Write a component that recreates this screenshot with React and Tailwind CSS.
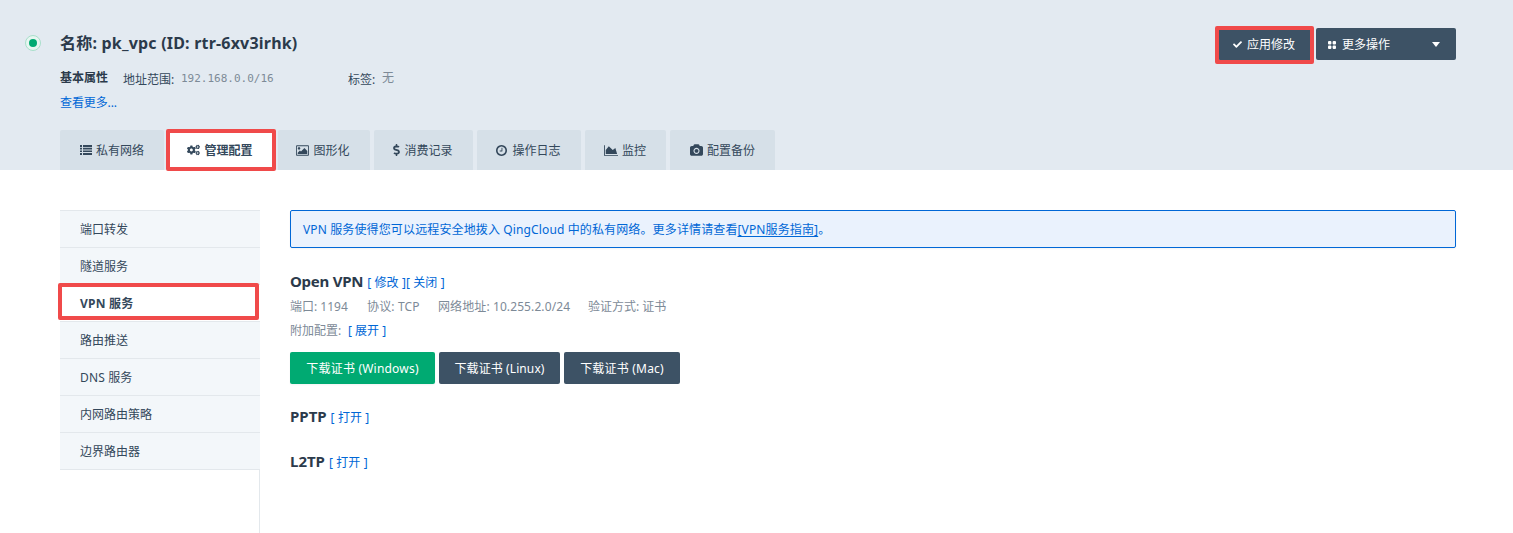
import React from "react";
import { FaCheck, FaCogs, FaDollarSign } from "react-icons/fa";

const glyph = (viewBox, d) =>
  function Glyph({ className }) {
    return (
      <svg viewBox={viewBox} className={className} fill="currentColor">
        <path d={d} />
      </svg>
    );
  };

const ListIcon = glyph(
  "0 0 12 10",
  "M0 0h2v2H0zM3 0h9v2H3zM0 2.8h2v1.7H0zM3 2.8h9v1.7H3zM0 5.4h2v1.7H0zM3 5.4h9v1.7H3zM0 8h2v2H0zM3 8h9v2H3z"
);

const PictureIcon = glyph(
  "-64 128 1920 1536",
  "M576 576q0 80-56 136t-136 56-136-56-56-136 56-136 136-56 136 56 56 136zm1024 384v448h-1408v-192l320-320 160 160 512-512zm96-704h-1600q-13 0-22.5 9.5t-9.5 22.5v1216q0 13 9.5 22.5t22.5 9.5h1600q13 0 22.5-9.5t9.5-22.5v-1216q0-13-9.5-22.5t-22.5-9.5zm160 32v1216q0 66-47 113t-113 47h-1600q-66 0-113-47t-47-113v-1216q0-66 47-113t113-47h1600q66 0 113 47t47 113z"
);

const ClockIcon = glyph(
  "128 128 1536 1536",
  "M1024 544v448q0 14-9 23t-23 9h-320q-14 0-23-9t-9-23v-64q0-14 9-23t23-9h224v-352q0-14 9-23t23-9h64q14 0 23 9t9 23zm416 352q0-148-73-273t-198-198-273-73-273 73-198 198-73 273 73 273 198 198 273 73 273-73 198-198 73-273zm224 0q0 209-103 385.5t-279.5 279.5-385.5 103-385.5-103-279.5-279.5-103-385.5 103-385.5 279.5-279.5 385.5-103 385.5 103 279.5 279.5 103 385.5z"
);

const AreaIcon = glyph(
  "0 128 2048 1536",
  "M2048 1536v128h-2048v-1536h128v1408h1920zm-384-1024l256 896h-1664v-576l448-576 576 576z"
);

const CameraIcon = glyph(
  "0 192 1920 1664",
  "M960 864q119 0 203.5 84.5t84.5 203.5-84.5 203.5-203.5 84.5-203.5-84.5-84.5-203.5 84.5-203.5 203.5-84.5zm704-416q106 0 181 75t75 181v896q0 106-75 181t-181 75h-1408q-106 0-181-75t-75-181v-896q0-106 75-181t181-75h224l51-136q19-49 69.5-84.5t103.5-35.5h512q53 0 103.5 35.5t69.5 84.5l51 136h224zm-704 1152q185 0 316.5-131.5t131.5-316.5-131.5-316.5-316.5-131.5-316.5 131.5-131.5 316.5 131.5 316.5 316.5 131.5z"
);

const GridIcon = ({ className }) => (
  <svg viewBox="0 0 8 8" className={className} fill="currentColor">
    <rect x="0" y="0" width="3.4" height="3.4" rx="1" />
    <rect x="4.6" y="0" width="3.4" height="3.4" rx="1" />
    <rect x="0" y="4.6" width="3.4" height="3.4" rx="1" />
    <rect x="4.6" y="4.6" width="3.4" height="3.4" rx="1" />
  </svg>
);

const tabs = [
  { label: "私有网络", Icon: ListIcon, icon: "w-3 h-2.5 mr-1", box: "w-[104px]" },
  { label: "管理配置", Icon: FaCogs, icon: "w-[13px] h-3 mr-1", box: "w-[106px] pr-[2px]", active: true },
  { label: "图形化", Icon: PictureIcon, icon: "w-[13px] h-[11px] mr-1", box: "w-[92px] pr-[2px]" },
  { label: "消费记录", Icon: FaDollarSign, icon: "w-[7px] h-3 mr-1", box: "w-[99px] pr-px" },
  { label: "操作日志", Icon: ClockIcon, icon: "w-[11px] h-[11px] mr-[5px]", box: "w-[104px] pr-px" },
  { label: "监控", Icon: AreaIcon, icon: "w-[14px] h-[11px] mr-1", box: "w-[81px] pr-px" },
  { label: "配置备份", Icon: CameraIcon, icon: "w-[13px] h-3 mr-1", box: "w-[105px]" },
];

const sections = ["端口转发", "隧道服务", "VPN 服务", "路由推送", "DNS 服务", "内网路由策略", "边界路由器"];

function Header() {
  return (
    <header className="flex h-[170px] flex-col bg-[#e3eaf1] pl-[25px] pr-[57px] pt-7">
      <div className="flex h-[102px] justify-between">
        <div className="flex">
          <span className="mt-[7px] flex size-4 items-center justify-center rounded-full border border-[#a9dfcb] bg-[#e6f6f1]">
            <span className="size-2 rounded-full bg-[#00aa72]" />
          </span>
          <div className="ml-[19px]">
            <h1 className="h-[30px] text-base font-bold leading-[30px] tracking-[0.2px] text-[#2b3a4b]">
              名称: pk_vpc (ID: rtr-6xv3irhk)
            </h1>
            <div className="mt-2.5 flex h-6 leading-6">
              <b className="w-[63px] leading-[20px] text-[#2b3a4b]">基本属性</b>
              <span className="w-[58px]">地址范围:</span>
              <span className="w-[167px] font-['DejaVu_Sans_Mono',monospace] text-[11px] leading-[21px] text-[#7d8a97]">192.168.0.0/16</span>
              <span className="w-[34px]">标签:</span>
              <span className="leading-[20px] text-[#7d8a97]">无</span>
            </div>
            <a className="block leading-[22px] tracking-[-0.1px] text-[#0067d6]">查看更多...</a>
          </div>
        </div>
        <div className="flex gap-1 text-white">
          <div className="relative">
            <button className="flex h-8 w-[94px] items-center rounded-xs bg-[#3d5265] pl-[15px]">
              <FaCheck className="mr-[5px] size-[9px]" />
              <span className="pt-0.5">应用修改</span>
            </button>
            <span className="absolute -left-[3px] -top-[2px] h-[38px] w-[99px] rounded-xs border-4 border-[#f04a4a]" />
          </div>
          <button className="flex h-8 w-[140px] items-center rounded-xs bg-[#3d5265] pl-3">
            <GridIcon className="mr-[6px] mt-px size-2" />
            <span className="pt-0.5">更多操作</span>
            <svg viewBox="0 0 8 5" className="ml-auto mr-4 h-[5px] w-2" fill="currentColor"><path d="M0 0h8L4 5z" /></svg>
          </button>
        </div>
      </div>
      <nav className="ml-[35px] flex h-10 gap-1">
        {tabs.map(({ label, Icon, icon, box, active }) => (
          <div key={label} className={`relative flex items-center justify-center rounded-t-xs ${box} ${active ? "bg-white font-bold" : "bg-[#d6e0e8]"}`}>
            <Icon className={icon} />
            <span className="pt-0.5">{label}</span>
            {active && <span className="absolute -left-[2px] -top-px h-[42px] w-[110px] rounded-xs border-4 border-[#f04a4a]" />}
          </div>
        ))}
      </nav>
    </header>
  );
}

function Sidebar() {
  return (
    <aside className="flex w-[200px] flex-col">
      <ul className="border-t border-[#e3e8ec]">
        {sections.map((name, i) => (
          <li key={name} className={`relative flex h-[37px] items-center border-b border-[#e3e8ec] pl-5 pt-0.5 ${i === 2 ? "bg-white font-bold tracking-[0.2px]" : "bg-[#f3f7fa]"}`}>
            {i === 4 ? <span className="tracking-[0.15px]">{name}</span> : name}
            {i === 2 && <span className="absolute -left-[2px] -top-[2px] h-[37px] w-[201px] rounded-xs border-4 border-[#f04a4a]" />}
          </li>
        ))}
      </ul>
      <div className="flex-1 border-r border-[#e3e8ec]" />
    </aside>
  );
}

const Heading = ({ children }) => (
  <b className="mr-1 text-[15px] text-[#2b3a4b]">{children}</b>
);

function Content() {
  return (
    <main className="w-[1166px]">
      <p className="h-[38px] rounded-xs border border-[#0067d6] bg-[#eaf2fd] pl-3 leading-[37px] tracking-[0.13px] text-[#0067d6] shadow-xs">
        VPN 服务使得您可以远程安全地拨入 QingCloud 中的私有网络。更多详情请查看<a className="underline underline-offset-2">[VPN服务指南]</a>。
      </p>
      <h2 className="mt-[23px] h-6 leading-5 text-[#0067d6]"><Heading><span className="tracking-[-0.25px]">Open VPN</span></Heading><span className="tracking-[0.1px]">[ 修改 ][ 关闭 ]</span></h2>
      <p className="flex h-6 leading-6 text-[#7d8a97]">
        <span className="w-[77px]">端口: 1194</span>
        <span className="w-[71px] tracking-[0.15px]">协议: TCP</span>
        <span className="w-[150px] tracking-[0.1px]">网络地址: 10.255.2.0/24</span>
        <span>验证方式: 证书</span>
      </p>
      <p className="flex h-6 leading-6 text-[#7d8a97]">
        <span className="w-[58px]">附加配置:</span>
        <a className="text-[#0067d6]">[ 展开 ]</a>
      </p>
      <div className="mt-[9px] flex gap-1 text-white">
        <button className="h-8 w-[145px] rounded-xs bg-[#00aa72] pt-0.5 tracking-[0.2px] shadow-xs">下载证书 (Windows)</button>
        <button className="h-8 w-[121px] rounded-xs bg-[#3d5265] pt-0.5 tracking-[0.1px]">下载证书 (Linux)</button>
        <button className="h-8 w-[116px] rounded-xs bg-[#3d5265] pt-0.5 tracking-[0.2px]">下载证书 (Mac)</button>
      </div>
      <h2 className="mt-[22px] h-6 leading-5 text-[#0067d6]"><Heading>PPTP</Heading><span className="tracking-[0.1px]">[ 打开 ]</span></h2>
      <h2 className="mt-[21px] h-6 leading-5 text-[#0067d6]"><Heading>L2TP</Heading><span className="tracking-[0.1px]">[ 打开 ]</span></h2>
    </main>
  );
}

export default function App() {
  return (
    <div className="flex h-[533px] w-[1513px] flex-col overflow-hidden whitespace-nowrap bg-white font-['Noto_Sans','Noto_Sans_CJK_SC',sans-serif] text-xs text-[#34485b]">
      <Header />
      <div className="flex flex-1 gap-[30px] pl-[60px] pt-10">
        <Sidebar />
        <Content />
      </div>
    </div>
  );
}
